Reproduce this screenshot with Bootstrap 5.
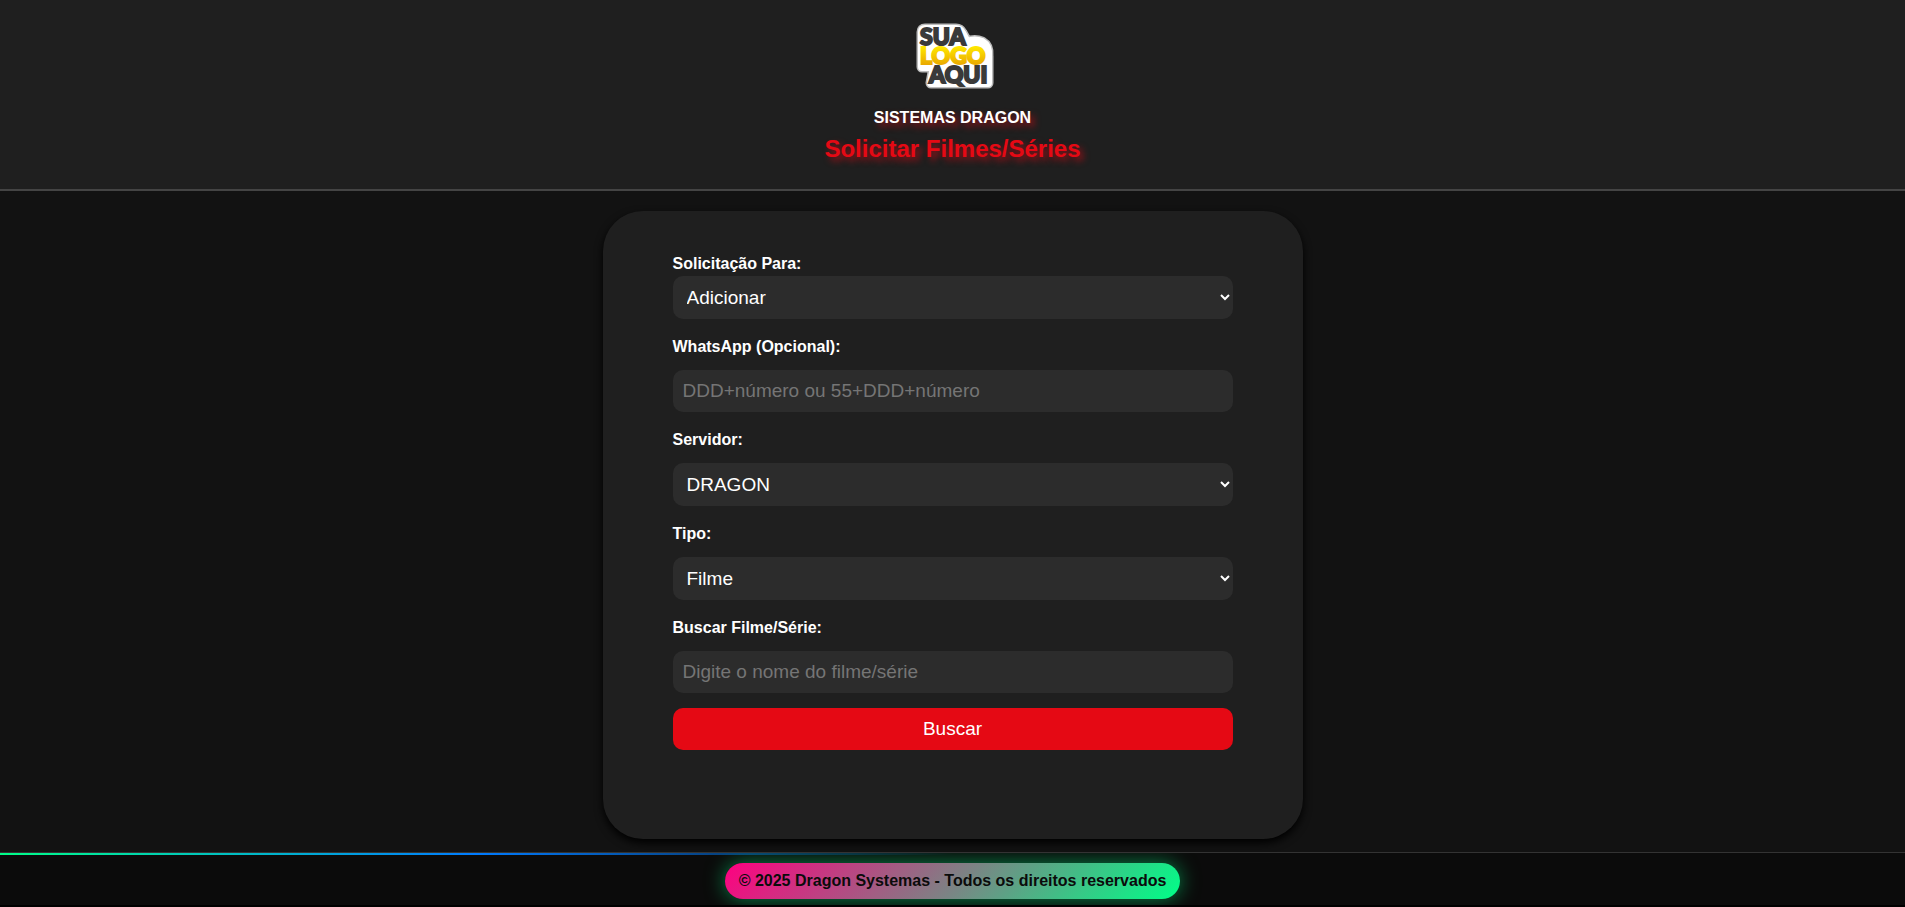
<!DOCTYPE html>
<html lang="pt-BR">
<head>
<meta charset="utf-8">
<meta name="viewport" content="width=device-width, initial-scale=1">
<title>Solicitar Filmes/Séries</title>
<link href="https://cdn.jsdelivr.net/npm/bootstrap@5.3.0/dist/css/bootstrap.min.css" rel="stylesheet">
<style>
body { background: #121212; color: #fff; font-family: "Liberation Sans", Arial, sans-serif; }
.site-header { background: #1f1f1f; border-bottom: 2px solid #444; padding: 16px 0 26px; }
.logo { width: 92px; height: 80px; }
.brand-name { font-size: 16px; line-height: 20px; margin-top: 12px; text-shadow: 4px 4px 6px rgba(229, 9, 20, .6); }
.page-title { font-size: 24px; line-height: 28px; font-weight: 700; margin-top: 7px; color: #e50914; text-shadow: 4px 4px 6px rgba(229, 9, 20, .6); }
.request-panel { max-width: 700px; background: #1f1f1f; border-radius: 40px; padding: 41px 70px 89px; box-shadow: 0 4px 8px #000; margin-top: 20px; }
.field-label { font-size: 16px; line-height: 24px; font-weight: 700; display: block; }
.field-label-spaced { margin: 16px 0 11px; }
.field { display: block; width: 100%; height: 42px; font-size: 19px; color: #fff; background-color: #2c2c2c; border: 0; border-radius: 10px; padding: 10px; }
select.field { height: 43px; }
.field::placeholder { color: #757575; }
.btn-search { --bs-btn-color: #fff; --bs-btn-bg: #e50914; --bs-btn-hover-color: #fff; --bs-btn-hover-bg: #b80710; --bs-btn-border-width: 0; --bs-btn-border-radius: 10px; --bs-btn-font-size: 19px; height: 42px; margin-top: 15px; }
.site-footer { background: #0b0b0b; border-top: 1px solid #333; border-bottom: 2px solid #000; margin-top: 13px; overflow: hidden; }
.footer-line { height: 2px; background: linear-gradient(90deg, #00ff88, #007bff 25%, transparent 50%); }
.copyright { font-size: 16px; line-height: 24px; font-weight: 700; color: #0b0b0b; background: linear-gradient(135deg, #ff0080, #00ff88); border-radius: 20px; padding: 6px 14px; margin: 8px 0 6px; box-shadow: 0 0 20px rgba(0, 255, 136, .5); }
</style>
</head>
<body>
<header class="site-header d-flex flex-column align-items-center text-center">
  <svg class="logo" viewBox="0 0 92 80" role="img" aria-label="Sua logo aqui">
    <defs>
      <linearGradient id="gold" x1="0" y1="0" x2="0" y2="1"><stop offset=".2" stop-color="#ffe800"/><stop offset=".9" stop-color="#e8a400"/></linearGradient>
      <path id="plate" d="M18 13H49Q53 13 55 17L60 26Q68 23 75 26Q82 30 81 40V67H24L27 51H15V16Q15 13 18 13Z" stroke-linejoin="round"/>
    </defs>
    <use href="#plate" fill="#fff" stroke="#bbb" stroke-width="11"/>
    <use href="#plate" fill="#fff" stroke="#fff" stroke-width="8"/>
    <g font-family="Lato, sans-serif" font-weight="900" font-size="23" stroke-width="2">
      <g fill="#3a3a3a" stroke="#3a3a3a"><text x="13" y="29">SUA</text><text x="22" y="67">AQUI</text></g>
      <text x="13" y="48" fill="url(#gold)" stroke="url(#gold)">LOGO</text>
    </g>
  </svg>
  <div class="brand-name fw-bold">SISTEMAS DRAGON</div>
  <h1 class="page-title mb-0">Solicitar Filmes/Séries</h1>
</header>
<main class="request-panel container-fluid">
  <form>
    <label class="field-label" for="pedido">Solicitação Para:</label>
    <select class="field" id="pedido"><option>Adicionar</option></select>
    <label class="field-label field-label-spaced" for="zap">WhatsApp (Opcional):</label>
    <input class="field" id="zap" type="text" placeholder="DDD+número ou 55+DDD+número">
    <label class="field-label field-label-spaced" for="servidor">Servidor:</label>
    <select class="field" id="servidor"><option>DRAGON</option></select>
    <label class="field-label field-label-spaced" for="tipo">Tipo:</label>
    <select class="field" id="tipo"><option>Filme</option></select>
    <label class="field-label field-label-spaced" for="busca">Buscar Filme/Série:</label>
    <input class="field" id="busca" type="text" placeholder="Digite o nome do filme/série">
    <button class="btn btn-search w-100" type="button">Buscar</button>
  </form>
</main>
<footer class="site-footer">
  <div class="footer-line"></div>
  <div class="d-flex justify-content-center"><p class="copyright">© 2025 Dragon Systemas - Todos os direitos reservados</p></div>
</footer>
<script src="https://cdn.jsdelivr.net/npm/bootstrap@5.3.0/dist/js/bootstrap.bundle.min.js"></script>
</body>
</html>
